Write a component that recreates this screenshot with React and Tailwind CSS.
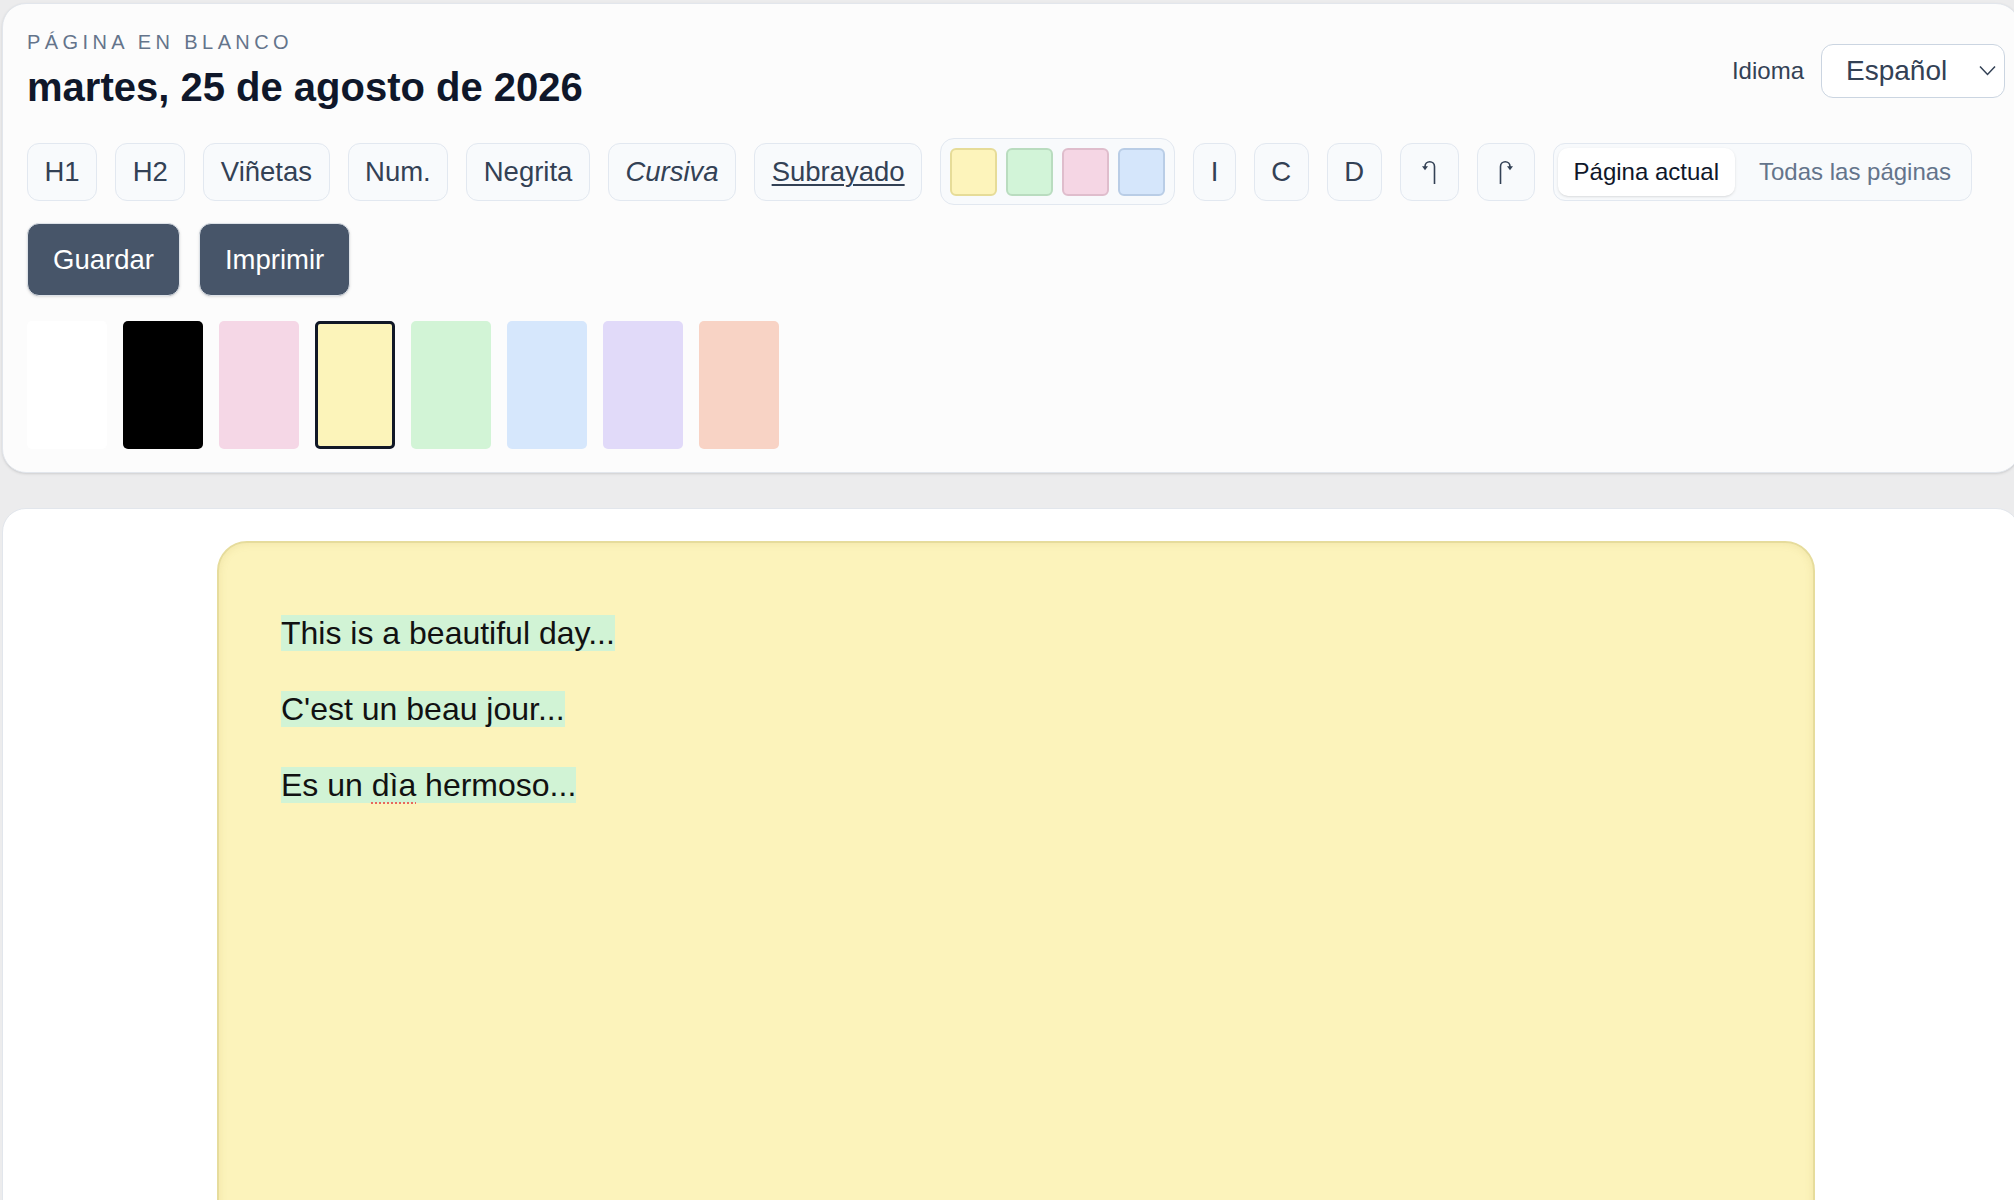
import React from "react";

const tools = [
  { label: "H1" },
  { label: "H2" },
  { label: "Viñetas" },
  { label: "Num." },
  { label: "Negrita" },
  { label: "Cursiva", className: "italic" },
  { label: "Subrayado", className: "underline underline-offset-[3px] decoration-[1.5px]" },
];

const highlights = [
  { name: "yellow", className: "bg-[#fdf4bb] border-[#e6dc98]" },
  { name: "green", className: "bg-[#d2f4d8] border-[#b9dcbf]" },
  { name: "pink", className: "bg-[#f5d6e4] border-[#dfbdcc]" },
  { name: "blue", className: "bg-[#d5e6fb] border-[#b9cde6]" },
];

const pageColors = [
  { name: "white", className: "bg-white" },
  { name: "black", className: "bg-black" },
  { name: "pink", className: "bg-[#f5d7e6]" },
  { name: "yellow", className: "bg-[#fcf4ba] border-[3px] border-[#111827]" },
  { name: "green", className: "bg-[#d2f4d6]" },
  { name: "blue", className: "bg-[#d6e7fc]" },
  { name: "purple", className: "bg-[#e1daf9]" },
  { name: "peach", className: "bg-[#f8d3c5]" },
];

const toolBtn =
  "h-[58px] px-[16.5px] rounded-[12px] border-[1.5px] border-[#e2e8f0] bg-[#f8fafc] text-[27.5px] text-[#334155] flex items-center justify-center";

const UndoIcon = ({ flip }) => (
  <svg
    width="15"
    height="25"
    viewBox="0 0 15 25"
    className={flip ? "-scale-x-100" : ""}
    fill="none"
  >
    <path d="M12.5 25V7.5a4.75 4.75 0 0 0-9.5 0V8" stroke="#334155" strokeWidth="1.6" />
    <path d="M0 7.2h6l-3 4z" fill="#334155" />
  </svg>
);

const App = () => {
  return (
    <div className="h-screen w-full overflow-hidden bg-[#ececed] font-['Liberation_Sans',Arial,sans-serif]">
      <div className="w-[2020px] pl-[2px] pt-[3px]">
        {/* Top panel */}
        <div className="rounded-[24px] border border-[#e2e6ec] bg-[#fcfcfc] pl-6 pr-[14px] pt-[26px] pb-[23px] shadow-sm">
          {/* Header */}
          <div className="flex items-center justify-between">
            <div>
              <p className="text-[20px] leading-[24px] tracking-[0.22em] uppercase text-[#64748b]">
                Página en blanco
              </p>
              <h1 className="mt-[9px] text-[40px] leading-[48px] font-bold text-[#0f172a]">
                martes, 25 de agosto de 2026
              </h1>
            </div>
            <div className="flex items-center gap-[17px]">
              <span className="text-[24px] text-[#334155]">Idioma</span>
              <div className="w-[184px] h-[54px] rounded-[12px] border-[1.5px] border-[#cbd5e1] bg-white flex items-center justify-between pl-[24px] pr-[8px]">
                <span className="text-[28px] text-[#334155]">Español</span>
                <svg width="17" height="11" viewBox="0 0 17 11" fill="none">
                  <path d="M1 1.5l7.5 8 7.5-8" stroke="#334155" strokeWidth="1.5" />
                </svg>
              </div>
            </div>
          </div>

          {/* Toolbar */}
          <div className="mt-[27px] flex items-center gap-[18px]">
            {tools.map((t) => (
              <button key={t.label} className={toolBtn}>
                <span className={t.className}>{t.label}</span>
              </button>
            ))}

            <div className="h-[67px] px-[9px] rounded-[14px] border-[1.5px] border-[#e2e8f0] bg-[#f8fafc] flex items-center gap-[9px]">
              {highlights.map((h) => (
                <div
                  key={h.name}
                  className={`w-[47px] h-[48px] rounded-[6px] border-2 ${h.className}`}
                />
              ))}
            </div>

            <button className={toolBtn}>I</button>
            <button className={toolBtn}>C</button>
            <button className={toolBtn}>D</button>
            <button className={`${toolBtn} w-[59px]`}>
              <UndoIcon />
            </button>
            <button className={`${toolBtn} w-[58px]`}>
              <UndoIcon flip />
            </button>

            {/* Scope switch */}
            <div className="h-[58px] p-[4px] rounded-[12px] border-[1.5px] border-[#e2e8f0] bg-[#f8fafc] flex items-center gap-2">
              <button className="h-full px-4 rounded-[10px] bg-white shadow-sm text-[24px] text-[#0f172a]">
                Página actual
              </button>
              <button className="h-full px-4 text-[24px] text-[#64748b]">
                Todas las páginas
              </button>
            </div>
          </div>

          {/* Actions */}
          <div className="mt-[18px] flex items-center gap-[19px]">
            <button className="h-[73px] px-[25px] rounded-[12px] border-[1.5px] border-[#dde2e8] bg-[#475569] text-[27.5px] text-white shadow-sm">
              Guardar
            </button>
            <button className="h-[73px] px-[25px] rounded-[12px] border-[1.5px] border-[#dde2e8] bg-[#475569] text-[27.5px] text-white shadow-sm">
              Imprimir
            </button>
          </div>

          {/* Page colours */}
          <div className="mt-[25px] flex items-center gap-4">
            {pageColors.map((c) => (
              <div key={c.name} className={`w-[80px] h-[128px] rounded-[5px] ${c.className}`} />
            ))}
          </div>
        </div>

        {/* Editor */}
        <div className="mt-[35px] h-[760px] rounded-[24px] border border-[#e2e6ec] bg-white pt-[32px]">
          <div className="ml-[214px] w-[1598px] h-[800px] rounded-[30px] border-2 border-[#e6dc9c] bg-[#fcf3bb] shadow-[inset_0_0_8px_rgba(170,150,50,0.15)] pl-[62px] pt-[72px] text-[32px] leading-[36px] text-[#111111]">
            <p className="mb-[40px]">
              <span className="bg-[#d1f3d5]">This is a beautiful day...</span>
            </p>
            <p className="mb-[40px]">
              <span className="bg-[#d1f3d5]">C'est un beau jour...</span>
            </p>
            <p>
              <span className="bg-[#d1f3d5]">
                Es un{" "}
                <span className="underline decoration-dotted decoration-2 decoration-[#e8675c] underline-offset-[6px]">
                  dìa
                </span>{" "}
                hermoso...
              </span>
            </p>
          </div>
        </div>
      </div>
    </div>
  );
};

export default App;
